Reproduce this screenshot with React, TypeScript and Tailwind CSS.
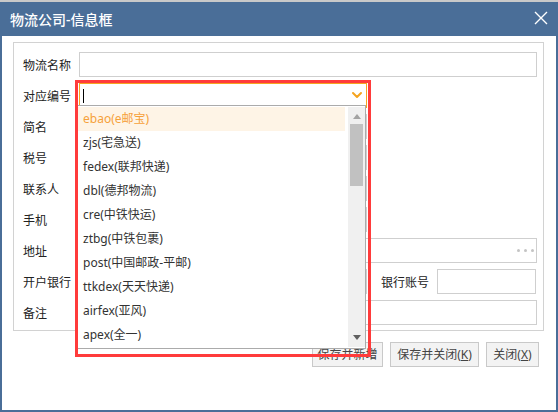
import { ChevronDown } from 'lucide-react'

const font = "font-['Noto_Sans','Noto_Sans_CJK_SC',sans-serif]"

const carriers = [
  'ebao(e邮宝)',
  'zjs(宅急送)',
  'fedex(联邦快递)',
  'dbl(德邦物流)',
  'cre(中铁快运)',
  'ztbg(中铁包裹)',
  'post(中国邮政-平邮)',
  'ttkdex(天天快递)',
  'airfex(亚风)',
  'apex(全一)',
]

function Row({ label, children }: { label: string; children: React.ReactNode }) {
  return (
    <div className="flex h-[25px] items-center">
      <span className="w-[56px] pt-[3px] text-[12px] text-[#222]">{label}</span>
      {children}
    </div>
  )
}

const input = 'h-[25px] border border-[#cfcfcf] bg-white'

export default function App() {
  return (
    <div className={`relative h-[412px] w-[558px] overflow-hidden bg-[#c9c9c9] pt-[2px] ${font}`}>
      <div className="flex h-[410px] flex-col border-x-2 border-b-2 border-[#4a6e98] bg-white">
        {/* title bar */}
        <div className="flex h-[34px] shrink-0 items-center justify-between bg-[#4a6e98] pl-[8px] pr-[8px]">
          <span className="text-[14px] font-medium text-white">物流公司-信息框</span>
          <svg width="14" height="14" viewBox="0 0 14 14" className="mb-[2px]">
            <path d="M1 1L13 13M13 1L1 13" stroke="white" strokeWidth="1.4" />
          </svg>
        </div>

        {/* form panel */}
        <div className="ml-[11px] mt-[6px] flex w-[531px] flex-col gap-[6px] border border-[#d2d2d2] pb-[5px] pl-[9px] pr-[6px] pt-[9px]">
          <Row label="物流名称">
            <div className={`${input} w-[458px]`} />
          </Row>
          <Row label="对应编号">
            <div className="relative h-[25px] w-[288px] border border-[#f5a41f] bg-white">
              <span className="absolute left-[3px] top-[5px] h-[14px] w-px bg-black" />
              <ChevronDown className="absolute right-[1px] top-[3px] h-[16px] w-[16px] text-[#f5a41f]" strokeWidth={3} />
            </div>
          </Row>
          <Row label="简名">
            <div className={`${input} w-[288px]`} />
          </Row>
          <Row label="税号">
            <div className={`${input} w-[288px]`} />
          </Row>
          <Row label="联系人">
            <div className={`${input} w-[288px]`} />
          </Row>
          <Row label="手机">
            <div className={`${input} w-[288px]`} />
          </Row>
          <Row label="地址">
            <div className={`${input} flex w-[458px] items-center justify-end gap-[4px] pr-[2px]`}>
              <span className="h-[3px] w-[3px] rounded-full bg-[#c4c4c4]" />
              <span className="h-[3px] w-[3px] rounded-full bg-[#c4c4c4]" />
              <span className="h-[3px] w-[3px] rounded-full bg-[#c4c4c4]" />
            </div>
          </Row>
          <Row label="开户银行">
            <div className={`${input} w-[288px]`} />
            <span className="ml-auto pt-[3px] text-[12px] text-[#222]">银行账号</span>
            <div className={`${input} ml-[8px] mr-[1px] w-[99px]`} />
          </Row>
          <Row label="备注">
            <div className={`${input} w-[458px]`} />
          </Row>
        </div>

        {/* buttons */}
        <div className="ml-[11px] mt-[11px] flex w-[531px] justify-end gap-[7px] pr-[5px] text-[12px] text-[#444]">
          <button className="h-[25px] w-[71px] border border-[#c9c9c9] bg-[#f3f3f3]">保存并新增</button>
          <button className="h-[25px] w-[89px] border border-[#c9c9c9] bg-[#f3f3f3]">
            保存并关闭(<span className="underline">K</span>)
          </button>
          <button className="h-[25px] w-[53px] border border-[#c9c9c9] bg-[#f3f3f3]">
            关闭(<span className="underline">X</span>)
          </button>
        </div>
      </div>

      {/* open dropdown list */}
      <div className="absolute left-[77px] top-[105px] flex h-[244px] w-[289px] border border-[#ababab] bg-white py-px">
        <ul className="w-[267px]">
          {carriers.map((c, i) => (
            <li
              key={c}
              className={`flex h-[24px] items-center pl-[5px] text-[12px] ${
                i === 0 ? 'bg-[#fef4e6] text-[#f6a13a]' : 'text-[#333]'
              }`}
            >
              {c}
            </li>
          ))}
        </ul>
        <div className="ml-[3px] flex w-[17px] flex-col items-center bg-[#f0f0f0]">
          <svg width="8" height="5" viewBox="0 0 8 5" className="mt-[7px]">
            <path d="M0 5L4 0L8 5Z" fill="#a3a3a3" />
          </svg>
          <div className="mt-[5px] h-[62px] w-[13px] bg-[#c1c1c1]" />
          <svg width="8" height="5" viewBox="0 0 8 5" className="mb-[7px] mt-auto">
            <path d="M0 0L4 5L8 0Z" fill="#606060" />
          </svg>
        </div>
      </div>

      {/* highlight frame */}
      <div className="absolute left-[75px] top-[80px] h-[277px] w-[296px] border-[3px] border-[#ff3b3b]" />
    </div>
  )
}
